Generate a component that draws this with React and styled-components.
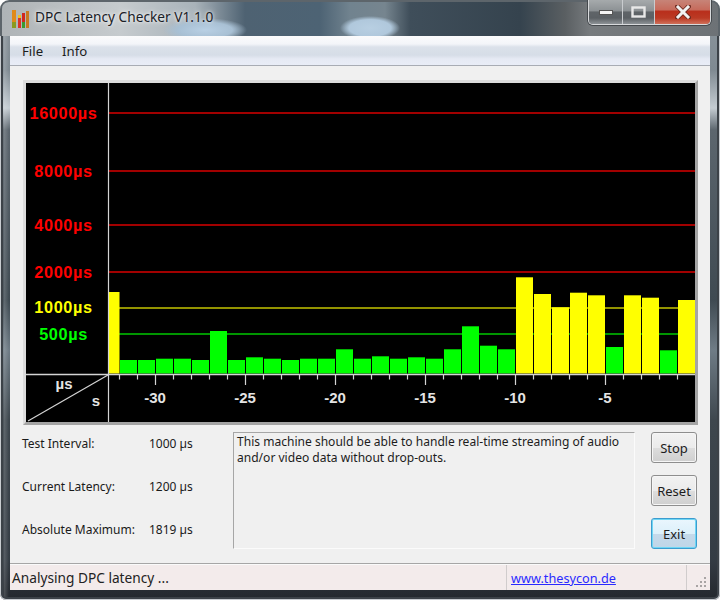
import React from "react";
import styled, { createGlobalStyle } from "styled-components";

const Global = createGlobalStyle`
  html, body { margin: 0; padding: 0; background: #fff; }
  body { font-family: "Noto Sans", "Liberation Sans", sans-serif; }
`;

const Window = styled.div`
  width: 720px;
  height: 600px;
  box-sizing: border-box;
  padding: 0 10px 10px;
  display: flex;
  flex-direction: column;
  border-radius: 9px 9px 6px 6px;
  overflow: hidden;
  box-shadow: inset 0 0 0 1px #c8ccd0, inset 0 0 0 3px #3c4248;
  background:
    linear-gradient(90deg, transparent 3px, rgba(255,255,255,.18) 4px, transparent 9px),
    linear-gradient(180deg, #8e979e 0, #7f8a92 70px, #c4ccd2 108px, #5c666e 130px, #3f4a52 300px, #6f7c86 350px, #3e474e 420px, #343c44 560px, #23282d 600px);
`;

const TitleBar = styled.div`
  height: 36px;
  flex: none;
  margin: 0 -10px;
  padding: 0 9px 0 12px;
  box-sizing: border-box;
  display: flex;
  align-items: flex-start;
  border-radius: 9px 9px 0 0;
  box-shadow: inset 0 2px 0 #5d656b, inset 2px 0 0 #5d656b, inset -2px 0 0 #5d656b;
  background:
    radial-gradient(ellipse 30px 12px at 370px 28px, #b8cfe2 0, #b0c8dc 70%, transparent 100%),
    radial-gradient(ellipse 42px 12px at 205px 30px, #b9d0e4 0, #a8c0d4 65%, transparent 100%),
    linear-gradient(90deg, #aeb3b6 0, #c6cbce 120px, #a9b3ba 195px, #4e6272 245px, #4d6374 320px, #71838f 350px, #76858f 385px, #3f4e5a 410px, #35434e 520px, #5a5f62 565px, #777b7e 590px, #6d7276 720px);
`;

const AppIcon = styled.svg`
  width: 17px;
  height: 18px;
  margin-top: 10px;
  flex: none;
`;

const TitleText = styled.span`
  margin: 8px 0 0 6px;
  font-size: 13.7px;
  line-height: 18px;
  color: #1a2026;
  text-shadow: 0 0 6px rgba(255,255,255,.9), 0 0 3px rgba(255,255,255,.8);
  flex: 1;
`;

const Controls = styled.div`
  display: flex;
  height: 24px;
  border: 1px solid #d8dadc;
  border-top: 0;
  border-radius: 0 0 5px 5px;
  overflow: hidden;
  box-shadow: 0 0 0 1px #45494d;
`;

const Control = styled.div`
  width: ${(p) => p.$w}px;
  display: flex;
  align-items: center;
  justify-content: center;
  border-left: ${(p) => (p.$first ? "0" : "1px solid #c9cccf")};
  background: ${(p) =>
    p.$close
      ? "linear-gradient(180deg, #c78478 0, #c66b5c 40%, #b92f1c 48%, #bb3a24 75%, #d0705a 100%)"
      : "linear-gradient(180deg, #a6aaac 0, #8c9194 45%, #5f6468 50%, #5b6064 75%, #8d9296 100%)"};
`;

const Client = styled.div`
  flex: 1;
  min-height: 0;
  display: flex;
  flex-direction: column;
  background: #f0f0f0;
`;

const MenuBar = styled.div`
  height: 30px;
  flex: none;
  box-sizing: border-box;
  border-bottom: 1px solid #a8acb4;
  padding: 0 0 0 12px;
  display: flex;
  align-items: center;
  gap: 19px;
  background: linear-gradient(180deg, #fbfbfc 0, #f3f5f9 8px, #dbe1ea 11px, #d6dde7 19px, #e6eaf4 23px, #e9edf7 100%);
`;

const MenuItem = styled.span`
  font-size: 13.2px;
  line-height: 16px;
  color: #1c1c1c;
`;

const Content = styled.div`
  flex: 1;
  min-height: 0;
  padding: 14px 12px 0;
  display: flex;
  flex-direction: column;
`;

const ChartFrame = styled.div`
  margin-left: 1px;
  flex: none;
  border: 3px solid;
  border-color: #dcdcdc #a4a4a4 #a4a4a4 #dcdcdc;
  background: #000;
  height: 339px;
`;

const ChartSvg = styled.svg`
  display: block;
  width: 669px;
  height: 339px;
`;

const YLabel = styled.text`
  font: bold 16.3px "Liberation Sans", sans-serif;
  letter-spacing: 0.6px;
  fill: ${(p) => p.$color};
  text-anchor: middle;
`;

const AxisLabel = styled.text`
  font: bold 15px "Liberation Sans", sans-serif;
  fill: #e4e4e4;
  text-anchor: middle;
`;

const Lower = styled.div`
  margin: 7px 1px 0 0;
  display: flex;
`;

const Stats = styled.div`
  width: 211px;
  flex: none;
  padding-top: 4px;
  display: grid;
  grid-template-columns: 127px 1fr;
  grid-auto-rows: 16px;
  row-gap: 27px;
  align-content: start;
`;

const StatText = styled.span`
  font-size: 12px;
  line-height: 16px;
  color: #1a1a1a;
  white-space: nowrap;
`;

const Message = styled.div`
  width: 402px;
  height: 117px;
  box-sizing: border-box;
  flex: none;
  border: 1px solid;
  border-color: #a6a6a6 #fbfbfb #fbfbfb #a6a6a6;
  padding: 1px 3px;
  font-size: 12.05px;
  line-height: 16px;
  color: #1c1c1c;
`;

const Buttons = styled.div`
  margin-left: 16px;
  width: 46px;
  display: flex;
  flex-direction: column;
  gap: 12px;
`;

const Button = styled.div`
  height: 31px;
  box-sizing: border-box;
  display: flex;
  align-items: center;
  justify-content: center;
  font-size: 13px;
  color: #1c1c1c;
  border-radius: 3px;
  border: 1px solid ${(p) => (p.$focus ? "#3c9ccf" : "#8e8e8e")};
  box-shadow: inset 0 0 0 1px ${(p) => (p.$focus ? "#6fd6f4" : "#f6f6f6")};
  background: ${(p) =>
    p.$focus
      ? "linear-gradient(180deg, #eaf6fd 0, #dcf0fa 50%, #c4d9ea 52%, #c0d6e8 100%)"
      : "linear-gradient(180deg, #f2f2f2 0, #ebebeb 50%, #dddddd 52%, #cfcfcf 100%)"};
`;

const StatusBar = styled.div`
  margin-top: auto;
  height: 27px;
  flex: none;
  box-sizing: border-box;
  border-top: 1px solid #a6a6a6;
  box-shadow: inset 0 1px 0 #fafafa;
  display: flex;
  padding-top: 1px;
  background: #f3ebeb;
`;

const StatusCell = styled.div`
  box-sizing: border-box;
  width: ${(p) => p.$w}px;
  flex: ${(p) => (p.$w ? "none" : "1")};
  padding-left: ${(p) => p.$pad}px;
  border-right: ${(p) => (p.$sep ? "1px solid #d0cccc" : "0")};
  display: flex;
  align-items: center;
  justify-content: ${(p) => (p.$end ? "flex-end" : "flex-start")};
  font-size: 13.7px;
  color: #222;
`;

const Link = styled.a`
  font-size: 12.7px;
  color: #2a2aff;
  text-decoration: underline;
`;

const Grip = styled.svg`
  width: 13px;
  height: 13px;
  margin: auto 2px 1px auto;
`;

const gridLines = [
  { y: 113, label: "16000µs", base: 119, line: "#d80000", text: "#ff0000" },
  { y: 171, label: "8000µs", base: 177, line: "#d80000", text: "#ff0000" },
  { y: 225, label: "4000µs", base: 231, line: "#d80000", text: "#ff0000" },
  { y: 272, label: "2000µs", base: 278, line: "#d80000", text: "#ff0000" },
  { y: 308, label: "1000µs", base: 313, line: "#c4c400", text: "#ffff00" },
  { y: 334, label: "500µs", base: 339.5, line: "#00c800", text: "#00ff00" },
];

const tops = [360, 360, 358.7, 358.7, 360, 331, 360, 357.3, 358.7, 360, 358.7, 358.7, 349.3, 358.7, 356.3, 358.7, 357.3, 358.7, 349.3, 326.3, 345.7, 349.3, 277.3, 294, 307.3, 292.7, 295.3, 347, 295.3, 297.7, 350.3, 300];

const seconds = [-30, -25, -20, -15, -10, -5];
const tickXs = Array.from({ length: 32 }, (_, i) => 119.5 + 18 * i);

function Chart() {
  return (
    <ChartSvg viewBox="26 83 669 339">
      {gridLines.map((g) => (
        <line key={g.label} x1="108" x2="695" y1={g.y} y2={g.y} stroke={g.line} strokeWidth="1.6" />
      ))}
      <rect x="109" y="292" width="10.5" height="81.5" fill="#ffff00" />
      {tops.map((t, i) => (
        <rect key={i} x={120 + 18 * i} y={t} width="17" height={373.5 - t} fill={t < 320 ? "#ffff00" : "#00ff00"} />
      ))}
      {gridLines.map((g) => (
        <YLabel key={g.label} x="63.5" y={g.base} $color={g.text}>{g.label}</YLabel>
      ))}
      <line x1="26" x2="695" y1="374.5" y2="374.5" stroke="#d4d4d4" strokeWidth="1.5" />
      <line x1="108.5" x2="108.5" y1="83" y2="422" stroke="#d4d4d4" strokeWidth="1.2" />
      <line x1="28" y1="421" x2="108" y2="375" stroke="#d4d4d4" strokeWidth="1.2" />
      {tickXs.map((x, i) => (
        <line key={x} x1={x} x2={x} y1="375" y2={(i - 2) % 5 === 0 ? 385 : 379.5} stroke="#d4d4d4" strokeWidth="1.2" />
      ))}
      {seconds.map((s, i) => (
        <AxisLabel key={s} x={155 + 90 * i} y="402.5">{s}</AxisLabel>
      ))}
      <AxisLabel x="64" y="389">µs</AxisLabel>
      <AxisLabel x="96" y="405.5">s</AxisLabel>
    </ChartSvg>
  );
}

export default function App() {
  return (
    <>
      <Global />
      <Window>
        <TitleBar>
          <AppIcon viewBox="0 0 17 18">
            <rect x="0" y="0" width="4" height="18" fill="#e08a1a" />
            <rect x="0" y="12" width="4" height="6" fill="#8a9a20" />
            <rect x="6" y="7" width="3" height="11" fill="#d8342a" />
            <rect x="6" y="5" width="3" height="3" fill="#f0c020" />
            <rect x="10" y="3" width="3" height="15" fill="#d02820" />
            <rect x="10" y="12" width="3" height="6" fill="#3a9a30" />
            <rect x="14" y="1" width="3" height="17" fill="#c87a20" />
          </AppIcon>
          <TitleText>DPC Latency Checker V1.1.0</TitleText>
          <Controls>
            <Control $w={33} $first>
              <svg width="14" height="5" viewBox="0 0 14 5"><rect x="0.5" y="0.5" width="13" height="4" fill="#f4f4f4" stroke="#555" strokeWidth="1" /></svg>
            </Control>
            <Control $w={31}>
              <svg width="15" height="12" viewBox="0 0 15 12"><rect x="1.5" y="1.5" width="12" height="9" fill="none" stroke="#e8e8e8" strokeWidth="2.4" /></svg>
            </Control>
            <Control $w={55} $close>
              <svg width="16" height="14" viewBox="0 0 16 14">
                <path d="M2.5 1.5 L13.5 12.5 M13.5 1.5 L2.5 12.5" stroke="#6e2a20" strokeWidth="4.6" strokeLinecap="square" />
                <path d="M3 2 L13 12 M13 2 L3 12" stroke="#f2f2f2" strokeWidth="3" strokeLinecap="square" />
              </svg>
            </Control>
          </Controls>
        </TitleBar>
        <Client>
          <MenuBar>
            <MenuItem>File</MenuItem>
            <MenuItem>Info</MenuItem>
          </MenuBar>
          <Content>
            <ChartFrame><Chart /></ChartFrame>
            <Lower>
              <Stats>
                <StatText>Test Interval:</StatText>
                <StatText>1000 µs</StatText>
                <StatText>Current Latency:</StatText>
                <StatText>1200 µs</StatText>
                <StatText>Absolute Maximum:</StatText>
                <StatText>1819 µs</StatText>
              </Stats>
              <Message>This machine should be able to handle real-time streaming of audio and/or video data without drop-outs.</Message>
              <Buttons>
                <Button>Stop</Button>
                <Button>Reset</Button>
                <Button $focus>Exit</Button>
              </Buttons>
            </Lower>
          </Content>
          <StatusBar>
            <StatusCell $w={497} $pad={2} $sep>Analysing DPC latency ...</StatusCell>
            <StatusCell $w={180} $pad={4} $sep><Link href="#">www.thesycon.de</Link></StatusCell>
            <StatusCell $end>
              <Grip viewBox="0 0 13 13">
                <g fill="#a8a4a4">
                  <rect x="9" y="1" width="2" height="2" />
                  <rect x="5" y="5" width="2" height="2" /><rect x="9" y="5" width="2" height="2" />
                  <rect x="1" y="9" width="2" height="2" /><rect x="5" y="9" width="2" height="2" /><rect x="9" y="9" width="2" height="2" />
                </g>
              </Grip>
            </StatusCell>
          </StatusBar>
        </Client>
      </Window>
    </>
  );
}
